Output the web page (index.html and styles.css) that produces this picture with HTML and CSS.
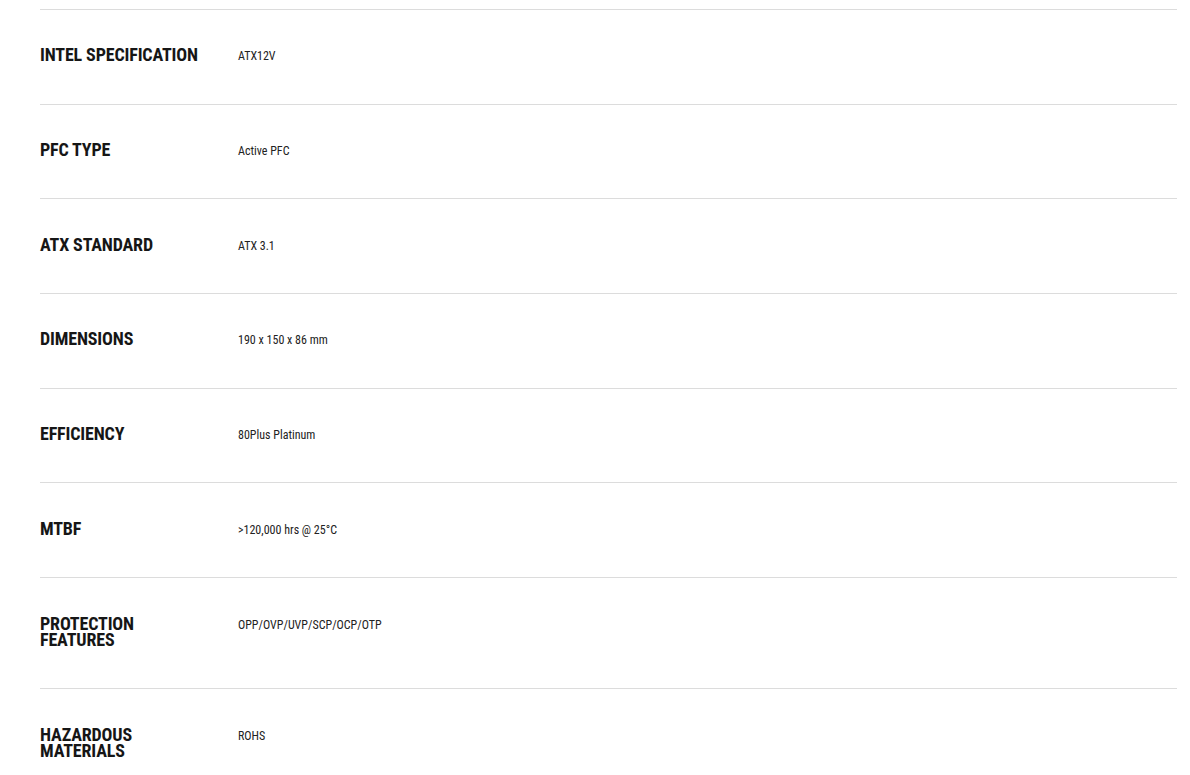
FILE: index.html
```html
<!DOCTYPE html>
<html lang="en">
<head>
<meta charset="utf-8">
<title>Specifications</title>
<link rel="stylesheet" href="styles.css">
</head>
<body>
<section class="specs">
  <div class="spec-row"><div class="spec-label">INTEL SPECIFICATION</div><div class="spec-value">ATX12V</div></div>
  <div class="spec-row"><div class="spec-label">PFC TYPE</div><div class="spec-value">Active PFC</div></div>
  <div class="spec-row"><div class="spec-label">ATX STANDARD</div><div class="spec-value">ATX 3.1</div></div>
  <div class="spec-row"><div class="spec-label">DIMENSIONS</div><div class="spec-value">190 x 150 x 86 mm</div></div>
  <div class="spec-row"><div class="spec-label">EFFICIENCY</div><div class="spec-value">80Plus Platinum</div></div>
  <div class="spec-row"><div class="spec-label">MTBF</div><div class="spec-value">&gt;120,000 hrs @ 25°C</div></div>
  <div class="spec-row"><div class="spec-label">PROTECTION FEATURES</div><div class="spec-value">OPP/OVP/UVP/SCP/OCP/OTP</div></div>
  <div class="spec-row"><div class="spec-label">HAZARDOUS MATERIALS</div><div class="spec-value">ROHS</div></div>
</section>
</body>
</html>
```
FILE: styles.css
```css
html, body {
  margin: 0;
  padding: 0;
  background: #ffffff;
}

body {
  font-family: "Roboto Condensed", Roboto, "Liberation Sans Narrow", sans-serif;
  font-stretch: condensed;
  color: #1b1b1b;
}

.specs {
  padding: 9px 13px 0 40px;
}

.spec-row {
  display: grid;
  grid-template-columns: 198px 1fr;
  align-items: start;
  border-top: 1px solid #dcdcdc;
  padding: 37.4px 0 39.8px;
}

.spec-label {
  font-size: 18px;
  font-weight: 700;
  line-height: 16.5px;
  letter-spacing: -0.15px;
  padding-right: 32px;
  color: #161616;
}

.spec-value {
  font-size: 12px;
  font-weight: 400;
  line-height: 12px;
  margin-top: 3px;
  color: #222222;
}
```
